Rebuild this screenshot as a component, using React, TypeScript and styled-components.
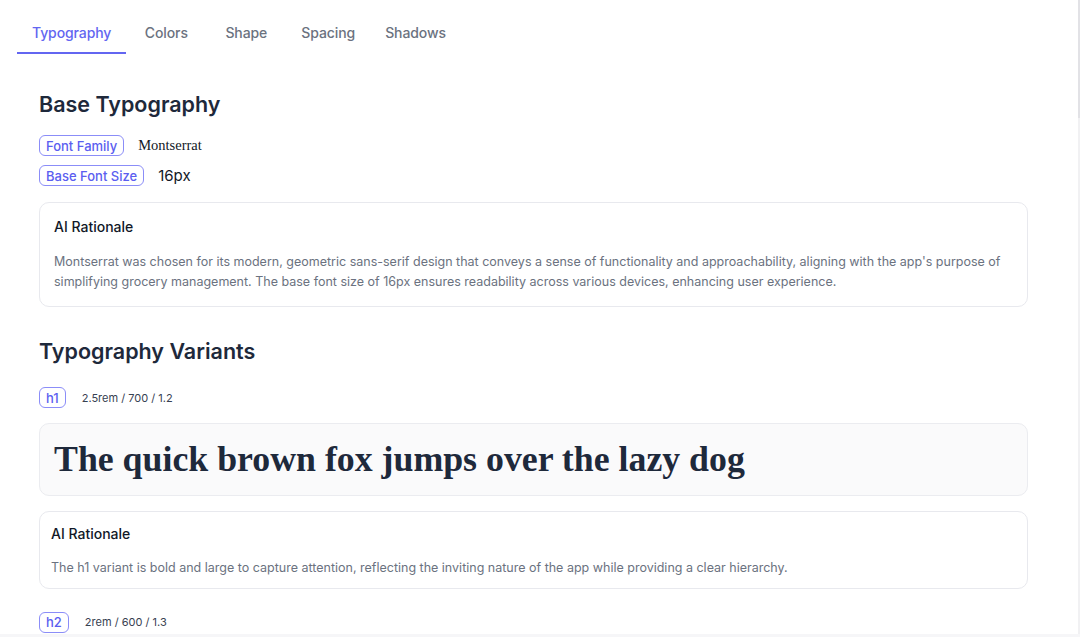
import React from "react";
import styled, { createGlobalStyle } from "styled-components";

const GlobalStyle = createGlobalStyle`
  html, body {
    margin: 0;
    padding: 0;
    background: #ffffff;
    overflow: hidden;
  }
  body {
    font-family: Inter, "Noto Sans", sans-serif;
    color: #1f2937;
    -webkit-font-smoothing: antialiased;
  }
`;

const Page = styled.div`
  height: 637px;
  box-sizing: border-box;
  padding: 10px 30px 0 17px;
  overflow: hidden;
`;

const TabBar = styled.div`
  display: flex;
`;

const Tab = styled.button<{ $active?: boolean }>`
  min-width: 80px;
  height: 44px;
  box-sizing: border-box;
  padding: 2px 15px 0;
  border: none;
  border-bottom: 2px solid ${(p) => (p.$active ? "#6366f1" : "transparent")};
  background: none;
  font-family: Inter, sans-serif;
  font-size: 14px;
  font-weight: 500;
  letter-spacing: -0.1px;
  color: ${(p) => (p.$active ? "#6366f1" : "#6b7280")};
  cursor: pointer;
`;

const Panel = styled.div`
  padding: 36px 22px 0;
`;

const SectionTitle = styled.h2<{ $spaced?: boolean }>`
  margin: ${(p) => (p.$spaced ? "30px" : "0")} 0 16px;
  font-size: 21.5px;
  line-height: 29px;
  font-weight: 600;
  color: #1e293b;
`;

const PropList = styled.div`
  display: flex;
  flex-direction: column;
  gap: 9px;
  margin-bottom: 16px;
`;

const PropRow = styled.div`
  display: flex;
  align-items: center;
  gap: 14px;
  height: 21px;
`;

const Badge = styled.span`
  display: inline-flex;
  align-items: center;
  height: 21px;
  box-sizing: border-box;
  padding: 0 6px;
  border: 1.5px solid #8b8df8;
  border-radius: 6px;
  font-size: 13px;
  font-weight: 500;
  color: #5b5ef0;
  white-space: nowrap;
`;

const PropValue = styled.span<{ $serif?: boolean }>`
  font-family: ${(p) => (p.$serif ? '"Liberation Serif", serif' : "Inter, sans-serif")};
  font-size: ${(p) => (p.$serif ? "14.5px" : "15px")};
  color: #111827;
`;

const RationaleCard = styled.div<{ $compact?: boolean }>`
  border: 1px solid #e8e9ee;
  border-radius: 10px;
  padding: ${(p) => (p.$compact ? "12px 11px 10px" : "14px")};
`;

const RationaleTitle = styled.div<{ $compact?: boolean }>`
  margin-bottom: ${(p) => (p.$compact ? "14px" : "15px")};
  font-size: 14px;
  line-height: 20px;
  font-weight: 500;
  color: #111827;
`;

const RationaleText = styled.p`
  margin: 0;
  font-size: 12.5px;
  line-height: 20px;
  color: #6b7280;
`;

const VariantList = styled.div`
  display: flex;
  flex-direction: column;
  gap: 23px;
  margin-top: 21px;
`;

const Variant = styled.div`
  display: flex;
  flex-direction: column;
  gap: 15px;
`;

const VariantHead = styled.div`
  display: flex;
  align-items: center;
  gap: 16px;
`;

const VariantSpec = styled.span`
  font-size: 11px;
  color: #374151;
`;

const SampleBox = styled.div<{ $size: number; $weight: number; $lh: number }>`
  background: #fafafb;
  border: 1px solid #ebecf0;
  border-radius: 10px;
  padding: 14px;
  font-family: "Liberation Serif", serif;
  font-size: ${(p) => p.$size}px;
  font-weight: ${(p) => p.$weight};
  line-height: ${(p) => p.$lh};
  color: #1e293b;
  white-space: nowrap;
  overflow: hidden;
`;

const BottomFade = styled.div`
  position: fixed;
  left: 0;
  right: 0;
  bottom: 0;
  height: 3px;
  background: #f6f6f8;
`;

const ScrollTrack = styled.div`
  position: fixed;
  top: 0;
  right: 0;
  width: 2px;
  height: 100%;
  background: #f1f1f3;
`;

const ScrollThumb = styled.div`
  width: 100%;
  height: 118px;
  background: #e2e2e6;
`;

const tabs = ["Typography", "Colors", "Shape", "Spacing", "Shadows"];

interface IVariant {
  tag: string;
  spec: string;
  size: number;
  weight: number;
  lh: number;
  rationale?: string;
}

const variants: IVariant[] = [
  {
    tag: "h1",
    spec: "2.5rem / 700 / 1.2",
    size: 35.8,
    weight: 700,
    lh: 1.2,
    rationale:
      "The h1 variant is bold and large to capture attention, reflecting the inviting nature of the app while providing a clear hierarchy.",
  },
  {
    tag: "h2",
    spec: "2rem / 600 / 1.3",
    size: 32,
    weight: 600,
    lh: 1.3,
  },
];

export default function App() {
  return (
    <>
      <GlobalStyle />
      <Page>
        <TabBar>
          {tabs.map((t, i) => (
            <Tab key={t} $active={i === 0}>
              {t}
            </Tab>
          ))}
        </TabBar>
        <Panel>
          <SectionTitle>Base Typography</SectionTitle>
          <PropList>
            <PropRow>
              <Badge>Font Family</Badge>
              <PropValue $serif>Montserrat</PropValue>
            </PropRow>
            <PropRow>
              <Badge>Base Font Size</Badge>
              <PropValue>16px</PropValue>
            </PropRow>
          </PropList>
          <RationaleCard>
            <RationaleTitle>AI Rationale</RationaleTitle>
            <RationaleText>
              Montserrat was chosen for its modern, geometric sans-serif design that conveys a sense of
              functionality and approachability, aligning with the app's purpose of simplifying grocery
              management. The base font size of 16px ensures readability across various devices, enhancing
              user experience.
            </RationaleText>
          </RationaleCard>

          <SectionTitle $spaced>Typography Variants</SectionTitle>
          <VariantList>
            {variants.map((v) => (
              <Variant key={v.tag}>
                <VariantHead>
                  <Badge>{v.tag}</Badge>
                  <VariantSpec>{v.spec}</VariantSpec>
                </VariantHead>
                {v.rationale && (
                  <>
                    <SampleBox $size={v.size} $weight={v.weight} $lh={v.lh}>
                      The quick brown fox jumps over the lazy dog
                    </SampleBox>
                    <RationaleCard $compact>
                      <RationaleTitle $compact>AI Rationale</RationaleTitle>
                      <RationaleText>{v.rationale}</RationaleText>
                    </RationaleCard>
                  </>
                )}
              </Variant>
            ))}
          </VariantList>
        </Panel>
      </Page>
      <ScrollTrack>
        <ScrollThumb />
      </ScrollTrack>
      <BottomFade />
    </>
  );
}
